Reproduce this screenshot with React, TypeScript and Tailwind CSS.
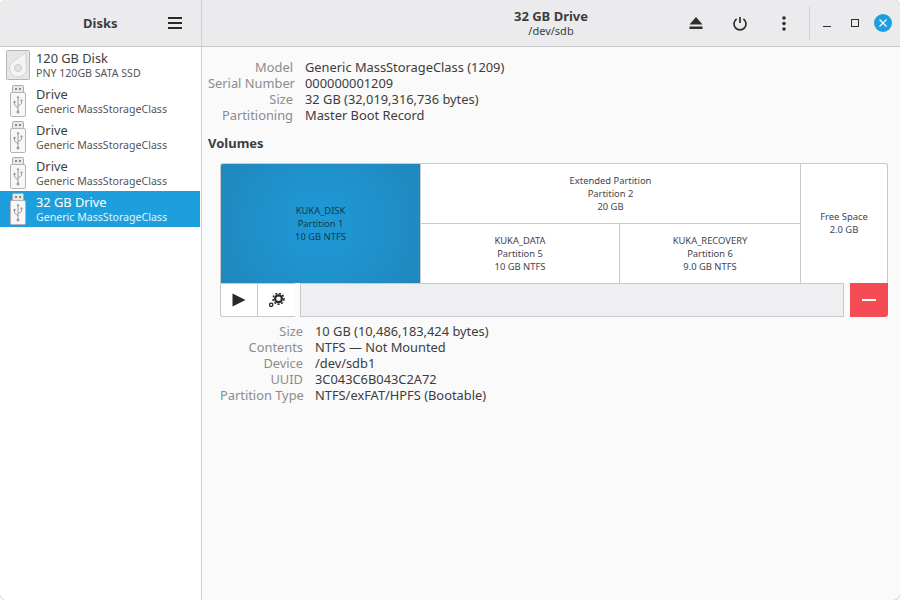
function DiskIcon() {
  return (
    <svg width="24" height="30" viewBox="0 0 24 30" className="shrink-0">
      <rect x="0.5" y="0.5" width="23" height="29" rx="1" fill="#e6e6e6" stroke="#b5b5b5" />
      <path d="M19.5 2.5 L20.5 17 A8.5 8.5 0 1 1 6.5 12 Z" fill="#f4f4f4" stroke="#d2d2d2" />
      <circle cx="12" cy="18" r="3.5" fill="#e4e4e4" stroke="#c8c8c8" />
    </svg>
  );
}

function UsbIcon() {
  return (
    <svg width="16" height="32" viewBox="0 0 16 32" className="shrink-0">
      <rect x="2.5" y="0.5" width="11" height="7" rx="1" fill="#e8e8e8" stroke="#aaaaaa" />
      <rect x="5" y="3" width="2" height="2" fill="#8a8a8a" />
      <rect x="9" y="3" width="2" height="2" fill="#8a8a8a" />
      <rect x="0.5" y="7.5" width="15" height="24" rx="1.5" fill="#f8f8f8" stroke="#b4b4b4" />
      <path d="M8 12 V27 M8 23 L4.5 20 V18 M8 21 L11.5 18.5 V16.5" fill="none" stroke="#9a9a9a" />
      <circle cx="8" cy="27" r="1.5" fill="#9a9a9a" />
      <circle cx="4.5" cy="17" r="1.2" fill="#9a9a9a" />
      <rect x="10.5" y="14.5" width="2" height="2" fill="#9a9a9a" />
      <path d="M8 10.5 L6.5 13 H9.5 Z" fill="#9a9a9a" />
    </svg>
  );
}

function DeviceRow({ title, sub, selected, disk }: { title: string; sub: string; selected?: boolean; disk?: boolean }) {
  return (
    <div className={`flex h-9 items-center ${selected ? "bg-[#1e9fdd] text-white" : "text-[#3d3d3d]"}`}>
      <div className="flex w-9 shrink-0 justify-center">
        {disk ? <DiskIcon /> : <UsbIcon />}
      </div>
      <div className="flex flex-col">
        <span className="text-[12.8px] leading-[16px]">{title}</span>
        <span className={`text-[10.6px] leading-[14px] ${selected ? "text-[#e4f3fb]" : "text-[#555555]"}`}>{sub}</span>
      </div>
    </div>
  );
}

function InfoRows({ rows, labelWidth }: { rows: string[][]; labelWidth: string }) {
  return (
    <div className="flex flex-col">
      {rows.map(([label, value]) => (
        <div key={label} className="flex h-4 items-center gap-3 text-[12.85px] whitespace-nowrap">
          <span className={`${labelWidth} text-right text-[#8c8c8c]`}>{label}</span>
          <span className="text-[#3d3d3d]">{value}</span>
        </div>
      ))}
    </div>
  );
}

function Partition({ lines, className }: { lines: string[]; className: string }) {
  return (
    <div className={`flex flex-col items-center justify-center text-[9.4px] leading-[13px] text-[#3f4450] ${className}`}>
      {lines.map((l) => (
        <span key={l}>{l}</span>
      ))}
    </div>
  );
}

export default function App() {
  return (
    <div className="h-[600px] w-[900px] overflow-hidden bg-white">
      <div
        className="flex h-full w-full overflow-hidden rounded-[7px] bg-[#fafafa] shadow-[0_0_2px_#8a8a8a]"
        style={{ fontFamily: '"Noto Sans", sans-serif' }}
      >
        {/* Sidebar */}
        <div className="flex w-[202px] shrink-0 flex-col border-r border-[#d0d0d0] bg-white">
          <div className="flex h-[47px] shrink-0 items-center justify-between border-b border-[#c8c8c8] bg-[#ebebed] pr-[19px] pl-[83px]">
            <span className="pt-px text-[13px] font-bold text-[#3d3d3d]">Disks</span>
            <svg width="14" height="12" viewBox="0 0 14 12">
              <path d="M0 1h14M0 6h14M0 11h14" stroke="#2a2a2a" strokeWidth="2" />
            </svg>
          </div>
          <div className="flex flex-col pr-px">
            <DeviceRow disk title="120 GB Disk" sub="PNY 120GB SATA SSD" />
            <DeviceRow title="Drive" sub="Generic MassStorageClass" />
            <DeviceRow title="Drive" sub="Generic MassStorageClass" />
            <DeviceRow title="Drive" sub="Generic MassStorageClass" />
            <DeviceRow selected title="32 GB Drive" sub="Generic MassStorageClass" />
          </div>
        </div>

        {/* Main */}
        <div className="flex min-w-0 flex-1 flex-col">
          <div className="flex h-[47px] shrink-0 items-center border-b border-[#c8c8c8] bg-[#ebebed]">
            <div className="ml-[287px] flex w-[124px] flex-col items-center">
              <span className="text-[13px] leading-[16px] font-bold text-[#3d3d3d]">32 GB Drive</span>
              <span className="text-[11px] leading-[14px] text-[#3d3d3d]">/dev/sdb</span>
            </div>
            <div className="ml-[76px] flex items-center">
              <svg width="14" height="14" viewBox="0 0 14 14">
                <path d="M7 1 L13.5 8.5 H0.5 Z M0.5 10.5 H13.5 V13 H0.5 Z" fill="#2e2e2e" />
              </svg>
              <svg width="14" height="15" viewBox="0 0 14 15" fill="none" className="ml-[30px]">
                <path d="M7 1 V7" stroke="#2e2e2e" strokeWidth="1.7" />
                <path d="M3.6 3 A6 6 0 1 0 10.4 3" stroke="#2e2e2e" strokeWidth="1.7" />
              </svg>
              <svg width="4" height="15" viewBox="0 0 4 15" className="ml-[35px]">
                <circle cx="2" cy="2" r="1.8" fill="#2e2e2e" />
                <circle cx="2" cy="7.5" r="1.8" fill="#2e2e2e" />
                <circle cx="2" cy="13" r="1.8" fill="#2e2e2e" />
              </svg>
            </div>
            <div className="ml-[23px] h-[34px] w-px bg-[#d2d2d2]" />
            <div className="ml-[13px] flex items-center">
              <div className="h-px w-2 translate-y-[3px] bg-[#2e2e2e]" />
              <div className="ml-[20px] h-2 w-2 border border-[#2e2e2e]" />
              <div className="ml-[15px] flex h-[18px] w-[18px] items-center justify-center rounded-full bg-[#1e9fdd]">
                <svg width="8" height="8" viewBox="0 0 8 8">
                  <path d="M0.5 0.5 L7.5 7.5 M7.5 0.5 L0.5 7.5" stroke="white" strokeWidth="1.2" />
                </svg>
              </div>
            </div>
          </div>

          <div className="flex flex-col pt-[13px] pr-3 pl-[6px]">
            <InfoRows
              labelWidth="w-[85px]"
              rows={[
                ["Model", "Generic MassStorageClass (1209)"],
                ["Serial Number", "000000001209"],
                ["Size", "32 GB (32,019,316,736 bytes)"],
                ["Partitioning", "Master Boot Record"],
              ]}
            />
            <div className="mt-[11px] text-[13px] leading-[16px] font-bold text-[#3d3d3d]">Volumes</div>

            <div className="mt-[12px] ml-3">
              {/* Partition map */}
              <div className="flex h-[120px] overflow-hidden rounded-t-[3px] border border-b-0 border-[#c8c8ce] bg-white">
                <Partition
                  lines={["KUKA_DISK", "Partition 1", "10 GB NTFS"]}
                  className="w-[199px] shrink-0 bg-[radial-gradient(circle,#1f9ad8_0%,#2087bd_100%)] !text-[#103a56]"
                />
                <div className="flex w-[381px] shrink-0 flex-col border-x border-[#c8c8ce]">
                  <Partition lines={["Extended Partition", "Partition 2", "20 GB"]} className="h-[60px] border-b border-[#c8c8ce]" />
                  <div className="flex flex-1">
                    <Partition lines={["KUKA_DATA", "Partition 5", "10 GB NTFS"]} className="w-[199px] border-r border-[#c8c8ce]" />
                    <Partition lines={["KUKA_RECOVERY", "Partition 6", "9.0 GB NTFS"]} className="flex-1" />
                  </div>
                </div>
                <Partition lines={["Free Space", "2.0 GB"]} className="flex-1 pb-[2px]" />
              </div>

              {/* Toolbar */}
              <div className="flex h-[34px] items-stretch">
                <div className="flex overflow-hidden rounded-bl-[3px] border border-r-0 border-[#c8c8ce] bg-white">
                  <div className="flex w-[37px] items-center justify-center border-r border-[#c8c8ce]">
                    <svg width="14" height="14" viewBox="0 0 14 14">
                      <path d="M0.5 0.5 L13.5 7 L0.5 13.5 Z" fill="#2a2a2a" />
                    </svg>
                  </div>
                  <div className="flex w-[37px] items-center justify-center">
                    <svg width="16" height="15" viewBox="0 0 16 15">
                      <circle cx="9.5" cy="5.8" r="3.4" fill="none" stroke="#2a2a2a" strokeWidth="2.2" />
                      <circle cx="9.5" cy="5.8" r="5.4" fill="none" stroke="#2a2a2a" strokeWidth="1.6" strokeDasharray="2 1.6" />
                      <circle cx="2.2" cy="11.8" r="1.7" fill="none" stroke="#2a2a2a" strokeWidth="1.3" />
                    </svg>
                  </div>
                </div>
                <div className="ml-[5px] flex-1 border border-[#c8c8ce] bg-[#efeff1]" />
                <div className="ml-[6px] flex w-[38px] items-center justify-center rounded-br-[3px] bg-[#f44b55]">
                  <div className="h-[2px] w-[14px] bg-white" />
                </div>
              </div>

              <div className="mt-[7px]">
                <InfoRows
                  labelWidth="w-[83px]"
                  rows={[
                    ["Size", "10 GB (10,486,183,424 bytes)"],
                    ["Contents", "NTFS — Not Mounted"],
                    ["Device", "/dev/sdb1"],
                    ["UUID", "3C043C6B043C2A72"],
                    ["Partition Type", "NTFS/exFAT/HPFS (Bootable)"],
                  ]}
                />
              </div>
            </div>
          </div>
        </div>
      </div>
    </div>
  );
}
